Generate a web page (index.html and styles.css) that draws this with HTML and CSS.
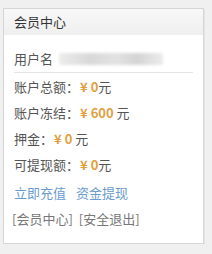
FILE: index.html
```html
<!DOCTYPE html>
<html lang="zh-CN">
<head>
<meta charset="utf-8">
<link rel="stylesheet" href="styles.css">
</head>
<body>
<div class="card">
  <div class="card-head">会员中心</div>
  <div class="card-body">
    <div class="row row-user"><span class="label">用户名</span><span class="blur"></span></div>
    <div class="row row-first"><span class="label">账户总额：</span><span class="money">¥ 0</span><span class="unit">元</span></div>
    <div class="row"><span class="label">账户冻结：</span><span class="money">¥ 600</span><span class="unit"> 元</span></div>
    <div class="row"><span class="label">押金：</span><span class="money">¥ 0</span><span class="unit"> 元</span></div>
    <div class="row"><span class="label">可提现额：</span><span class="money">¥ 0</span><span class="unit">元</span></div>
    <div class="row row-links"><a class="link">立即充值</a><a class="link">资金提现</a></div>
    <div class="row row-bottom"><a class="nav">[会员中心]</a><a class="nav nav-second">[安全退出]</a></div>
  </div>
</div>
</body>
</html>
```

FILE: styles.css
```css
html, body {
  margin: 0;
  padding: 0;
  background: #f0f0f0;
}
body {
  padding: 8px 8px 0 3px;
  font-family: "Noto Sans CJK SC", "Noto Sans", sans-serif;
  font-size: 13px;
  color: #555;
}
.card {
  width: 199px;
  height: 234px;
  background: #fff;
  border: 1px solid #d6d6d6;
  box-shadow: 1px 1px 0 #e4e4e4;
}
.card-head {
  height: 26px;
  line-height: 26px;
  padding-left: 10px;
  background: linear-gradient(#f8f8f8, #efefef);
  color: #333;
}
.card-body {
  padding: 11px 10px 0 10px;
}
.row {
  height: 26px;
  line-height: 26px;
  display: flex;
  align-items: center;
  white-space: pre;
}
.row-user {
  border-bottom: 1px solid #e6e6e6;
}
.row-first {
  margin-top: 1px;
}
.blur {
  display: block;
  width: 104px;
  height: 12px;
  margin-left: 6px;
  background: linear-gradient(90deg, #ececec, #d8d8d8 30%, #e2e2e2 55%, #d4d4d4 75%, #ececec);
  filter: blur(1.5px);
}
.money {
  color: #e0a040;
  font-weight: bold;
  margin-left: 1px;
}
.unit {
  color: #555;
}
.row-links {
  margin-top: 2px;
  gap: 10px;
}
.link {
  color: #6a9ccf;
}
.row-bottom {
  margin-left: -2px;
}
.nav {
  color: #777;
}
.nav-second {
  margin-left: 6px;
}
```
